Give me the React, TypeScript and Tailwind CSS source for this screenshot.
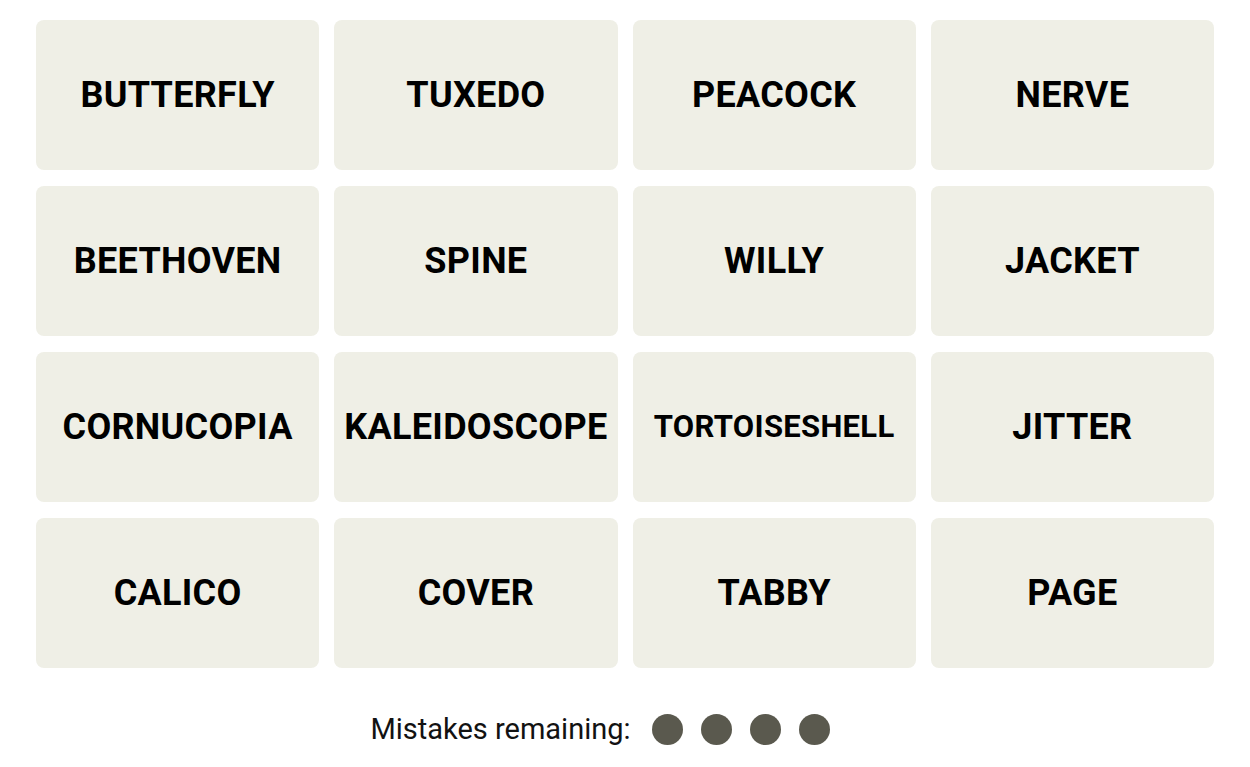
const words = [
  "BUTTERFLY", "TUXEDO", "PEACOCK", "NERVE",
  "BEETHOVEN", "SPINE", "WILLY", "JACKET",
  "CORNUCOPIA", "KALEIDOSCOPE", "TORTOISESHELL", "JITTER",
  "CALICO", "COVER", "TABBY", "PAGE",
];

function Tile({ word }: { word: string }) {
  // long words get shrunk so they stay inside the tile
  const size = word.length > 12 ? "text-[31px]" : "text-[36px]";
  return (
    <button className="flex h-[150px] items-center justify-center rounded-[8px] bg-[#efefe6]">
      <span className={`${size} font-bold uppercase tracking-[0.3px] text-black`}>{word}</span>
    </button>
  );
}

export default function App() {
  return (
    <div className="min-h-[767px] bg-white pt-[20px] font-['Roboto',_'Liberation_Sans',_sans-serif]">
      <div className="grid grid-cols-4 gap-x-[15px] gap-y-[16px] px-[36px]">
        {words.map((w) => (
          <Tile key={w} word={w} />
        ))}
      </div>
      <div className="mt-[40px] flex items-center justify-center pr-[50px]">
        <span className="mr-[21px] text-[29px] text-[#121212]">Mistakes remaining:</span>
        <div className="flex gap-[18px]">
          {[0, 1, 2, 3].map((i) => (
            <span key={i} className="h-[31px] w-[31px] rounded-full bg-[#5a594e]" />
          ))}
        </div>
      </div>
    </div>
  );
}
